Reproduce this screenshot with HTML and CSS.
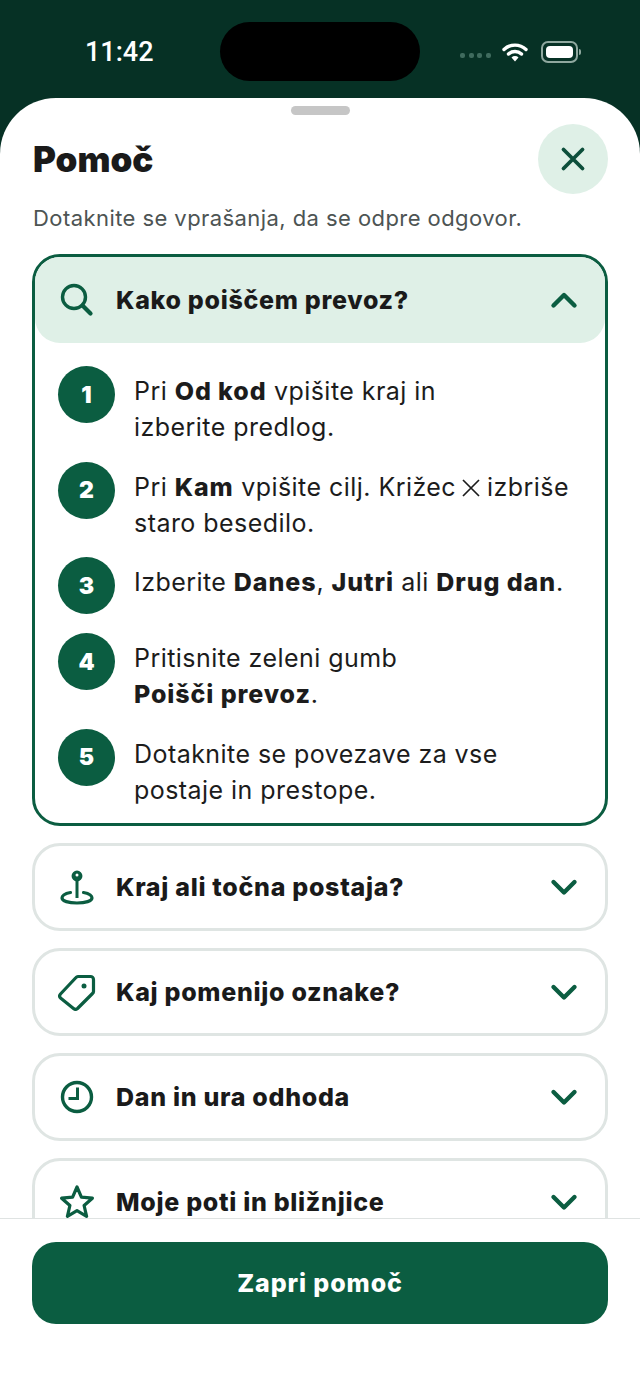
FILE: index.html
```html
<!DOCTYPE html>
<html lang="sl">
<head>
    <meta charset="UTF-8">
    <meta name="viewport" content="width=device-width, initial-scale=1.0">
    <title>Pomoč</title>
    <link rel="stylesheet" href="styles.css">
</head>
<body>
    <div class="status-bar">
        <span class="time">11:42</span>
        <div class="island"></div>
        <div class="status-icons">
            <div class="signal"><i></i><i></i><i></i><i></i></div>
            <svg class="wifi" width="28" height="22" viewBox="0 0 28 22"><path d="M3 8.500a16 16 0 0 1 22 0M7.500 13a9.500 9.500 0 0 1 13 0" fill="none" stroke="#fff" stroke-width="3.400" stroke-linecap="round"/><path d="M10.500 16.500a5 5 0 0 1 7 0L14 20.500z" fill="#fff"/></svg>
            <div class="battery"><div class="battery-fill"></div></div>
            <div class="battery-cap"></div>
        </div>
    </div>

    <div class="sheet">
        <div class="handle"></div>
        <div class="sheet-head">
            <h1>Pomoč</h1>
            <button class="close-btn">
                <svg width="28" height="28" viewBox="0 0 28 28"><path d="M4.500 4.500l19 19M23.500 4.500l-19 19" fill="none" stroke="#0d4f3b" stroke-width="3.800" stroke-linecap="round"/></svg>
            </button>
        </div>
        <p class="intro">Dotaknite se vprašanja, da se odpre odgovor.</p>

        <div class="list">
            <div class="item item-open">
                <div class="item-head">
                    <svg class="item-icon" width="36" height="36" viewBox="0 0 36 36"><circle cx="15" cy="15" r="11.500" fill="none" stroke="#0b5d41" stroke-width="3.400"/><path d="M23.500 23.500l8 8" fill="none" stroke="#0b5d41" stroke-width="4.200" stroke-linecap="round"/></svg>
                    <span class="item-title">Kako poiščem prevoz?</span>
                    <svg class="chevron" width="30" height="18" viewBox="0 0 30 18"><path d="M4.500 14.500L15 4l10.500 10.500" fill="none" stroke="#0b5d41" stroke-width="4.400" stroke-linecap="round" stroke-linejoin="round"/></svg>
                </div>
                <ol class="steps">
                    <li class="step"><span class="step-num">1</span><p>Pri <b>Od kod</b> vpišite kraj in<br>izberite predlog.</p></li>
                    <li class="step"><span class="step-num">2</span><p>Pri <b>Kam</b> vpišite cilj. Križec <svg class="inline-x" width="18" height="18" viewBox="0 0 18 18"><path d="M1 1l16 16M17 1L1 17" fill="none" stroke="#1c1c1c" stroke-width="1.700"/></svg> izbriše<br>staro besedilo.</p></li>
                    <li class="step"><span class="step-num">3</span><p>Izberite <b>Danes</b>, <b>Jutri</b> ali <b>Drug dan</b>.</p></li>
                    <li class="step"><span class="step-num">4</span><p>Pritisnite zeleni gumb<br><b>Poišči prevoz</b>.</p></li>
                    <li class="step"><span class="step-num">5</span><p>Dotaknite se povezave za vse<br>postaje in prestope.</p></li>
                </ol>
            </div>

            <div class="item">
                <div class="item-head">
                    <svg class="item-icon" width="36" height="36" viewBox="0 0 36 36"><circle cx="18" cy="7" r="4.200" fill="#0b5d41" stroke="#0b5d41" stroke-width="2.500"/><circle cx="18" cy="6" r="1.500" fill="#fff"/><path d="M18 10v19" fill="none" stroke="#0b5d41" stroke-width="3"/><path d="M11.500 23.500C6 24.500 3 26.500 3 29c0 3 6.500 5 15 5s15-2 15-5c0-2.500-3-4.500-8.500-5.500" fill="none" stroke="#0b5d41" stroke-width="3.200" stroke-linecap="round"/></svg>
                    <span class="item-title">Kraj ali točna postaja?</span>
                    <svg class="chevron" width="30" height="18" viewBox="0 0 30 18"><path d="M4.500 4L15 14.500 25.500 4" fill="none" stroke="#0b5d41" stroke-width="4.400" stroke-linecap="round" stroke-linejoin="round"/></svg>
                </div>
            </div>
            <div class="item">
                <div class="item-head">
                    <svg class="item-icon" width="38" height="38" viewBox="0 0 38 38"><path d="M2.500 21L18 4.500a3 3 0 0 1 2-1h12.500a3 3 0 0 1 3 3v12a3 3 0 0 1-1 2L19.500 35.500a3 3 0 0 1-4 0L2.500 25a3 3 0 0 1 0-4z" fill="none" stroke="#0b5d41" stroke-width="3.200" stroke-linejoin="round"/><circle cx="26" cy="13" r="2.500" fill="#0b5d41"/></svg>
                    <span class="item-title">Kaj pomenijo oznake?</span>
                    <svg class="chevron" width="30" height="18" viewBox="0 0 30 18"><path d="M4.500 4L15 14.500 25.500 4" fill="none" stroke="#0b5d41" stroke-width="4.400" stroke-linecap="round" stroke-linejoin="round"/></svg>
                </div>
            </div>
            <div class="item">
                <div class="item-head">
                    <svg class="item-icon" width="36" height="36" viewBox="0 0 36 36"><circle cx="18" cy="18" r="14.500" fill="none" stroke="#0b5d41" stroke-width="3.400"/><path d="M18.500 8.500v11h-9" fill="none" stroke="#0b5d41" stroke-width="3"/></svg>
                    <span class="item-title">Dan in ura odhoda</span>
                    <svg class="chevron" width="30" height="18" viewBox="0 0 30 18"><path d="M4.500 4L15 14.500 25.500 4" fill="none" stroke="#0b5d41" stroke-width="4.400" stroke-linecap="round" stroke-linejoin="round"/></svg>
                </div>
            </div>
            <div class="item">
                <div class="item-head">
                    <svg class="item-icon" width="36" height="36" viewBox="0 0 36 36"><path d="M18 3l4.400 10.200 11 1-8.300 7.300 2.500 10.800L18 26.600 8.400 32.300l2.500-10.800L2.600 14.200l11-1z" fill="none" stroke="#0b5d41" stroke-width="3.200" stroke-linejoin="round"/></svg>
                    <span class="item-title">Moje poti in bližnjice</span>
                    <svg class="chevron" width="30" height="18" viewBox="0 0 30 18"><path d="M4.500 4L15 14.500 25.500 4" fill="none" stroke="#0b5d41" stroke-width="4.400" stroke-linecap="round" stroke-linejoin="round"/></svg>
                </div>
            </div>
        </div>

        <div class="sheet-foot">
            <button class="btn-close-help">Zapri pomoč</button>
        </div>
    </div>
</body>
</html>
```

FILE: styles.css
```css
* {
    box-sizing: border-box;
}
body {
    margin: 0;
    height: 1391px;
    overflow: hidden;
    display: flex;
    flex-direction: column;
    font-family: Inter, "Open Sans", sans-serif;
    background-color: #063125;
    color: #1c1c1c;
}

/* status bar */
.status-bar {
    height: 98px;
    flex: none;
    display: grid;
    grid-template-columns: 1fr 200px 1fr;
    padding-top: 22px;
    align-items: start;
}
.time {
    color: #fff;
    font-family: Roboto, sans-serif;
    font-size: 27px;
    font-weight: 500;
    line-height: 61px;
    padding-left: 85px;
}
.island {
    width: 200px;
    height: 59px;
    background-color: #000;
    border-radius: 30px;
}
.status-icons {
    display: flex;
    align-items: center;
    height: 59px;
    padding-left: 40px;
}
.signal {
    display: flex;
    gap: 3.500px;
    margin-top: 7px;
}
.signal i {
    width: 5px;
    height: 5px;
    border-radius: 2px;
    background-color: #3f6b5e;
}
.wifi {
    margin-left: 10px;
}
.battery {
    width: 37px;
    height: 22px;
    margin-left: 12px;
    padding: 3px;
    border: 2px solid #8fa89f;
    border-radius: 7px;
}
.battery-fill {
    height: 100%;
    background-color: #fff;
    border-radius: 4px;
}
.battery-cap {
    width: 2px;
    height: 6px;
    margin-left: 1px;
    background-color: #8fa89f;
    border-radius: 0 2px 2px 0;
}

/* sheet */
.sheet {
    flex: 1;
    min-height: 0;
    display: flex;
    flex-direction: column;
    background-color: #fff;
    border-radius: 56px 56px 0 0;
    padding-top: 8px;
}
.handle {
    width: 59px;
    height: 9px;
    flex: none;
    margin: 0 auto;
    background-color: #c6c6c6;
    border-radius: 5px;
}
.sheet-head {
    display: flex;
    justify-content: space-between;
    align-items: center;
    flex: none;
    margin-top: 9px;
    padding: 0 32px 0 33px;
}
.sheet-head h1 {
    margin: 0;
    font-size: 35px;
    font-weight: 900;
    color: #1a1a1a;
}
.close-btn {
    width: 70px;
    height: 70px;
    display: flex;
    align-items: center;
    justify-content: center;
    padding: 0;
    border: none;
    border-radius: 50%;
    background-color: #dff0e7;
}
.intro {
    flex: none;
    margin: 10px 0 0;
    padding-left: 33px;
    font-size: 22px;
    line-height: 28px;
    letter-spacing: 0.430px;
    color: #4d5453;
}

/* list */
.list {
    flex: 1;
    min-height: 0;
    overflow: hidden;
    margin-top: 22px;
    padding: 0 32px;
    display: flex;
    flex-direction: column;
    gap: 17px;
}
.item {
    flex: none;
    border: 3px solid #dfe5e3;
    border-radius: 28px;
    background-color: #fff;
}
.item-open {
    border-color: #0b5d41;
}
.item-head {
    height: 82px;
    display: flex;
    align-items: center;
    padding: 0 24px;
    border-radius: 25px;
}
.item-open .item-head {
    height: 86px;
    background-color: #dff0e7;
}
.item-icon {
    flex: none;
    width: 38px;
    margin-left: -1px;
}
.item-title {
    flex: 1;
    margin-left: 20px;
    font-size: 25px;
    font-weight: 800;
    letter-spacing: 0.700px;
    color: #1a1a1a;
}
.chevron {
    flex: none;
    margin-right: 2px;
}

/* steps */
.steps {
    list-style: none;
    margin: 0;
    padding: 23px 23px 18px;
    display: flex;
    flex-direction: column;
    gap: 19px;
}
.step {
    display: flex;
    gap: 19px;
}
.step-num {
    width: 57px;
    height: 57px;
    flex: none;
    display: flex;
    align-items: center;
    justify-content: center;
    border-radius: 50%;
    background-color: #0b5d41;
    color: #fff;
    font-size: 23px;
    font-weight: 900;
}
.step p {
    margin: 0 0 -2.500px;
    padding-top: 7px;
    font-size: 25px;
    line-height: 36px;
    letter-spacing: 0.450px;
    color: #1c1c1c;
}
.step b {
    font-weight: 800;
    letter-spacing: 0.900px;
}
.inline-x {
    vertical-align: -1px;
    margin-left: -2px;
}

/* footer */
.sheet-foot {
    flex: none;
    height: 173px;
    padding: 23px 32px 0;
    border-top: 1px solid #dfe3e2;
    background-color: #fff;
}
.btn-close-help {
    width: 100%;
    height: 82px;
    border: none;
    border-radius: 24px;
    background-color: #0b5d41;
    color: #fff;
    font-family: Inter, sans-serif;
    font-size: 25px;
    font-weight: 800;
    letter-spacing: 0.900px;
}
```
